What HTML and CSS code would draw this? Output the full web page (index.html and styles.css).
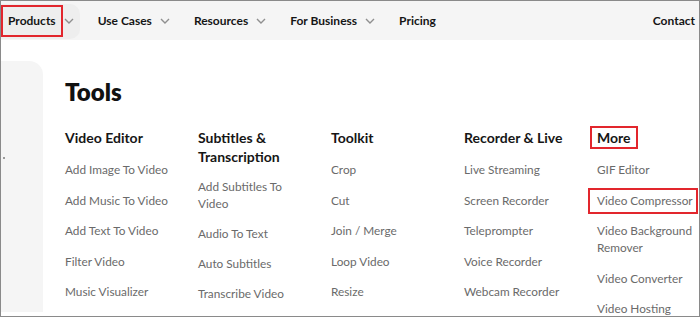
FILE: index.html
```html
<!DOCTYPE html>
<html lang="en">
<head>
  <meta charset="UTF-8" />
  <title>Tools menu</title>
  <link rel="stylesheet" href="styles.css">
</head>
<body>
  <div class="frame">
    <nav class="topbar">
      <div class="nav-item current">
        <span class="label marked">Products</span>
        <svg class="chev" viewBox="0 0 10 6"><path d="M1 1l4 4 4-4"/></svg>
      </div>
      <div class="nav-item">
        <span class="label">Use Cases</span>
        <svg class="chev" viewBox="0 0 10 6"><path d="M1 1l4 4 4-4"/></svg>
      </div>
      <div class="nav-item">
        <span class="label">Resources</span>
        <svg class="chev" viewBox="0 0 10 6"><path d="M1 1l4 4 4-4"/></svg>
      </div>
      <div class="nav-item">
        <span class="label">For Business</span>
        <svg class="chev" viewBox="0 0 10 6"><path d="M1 1l4 4 4-4"/></svg>
      </div>
      <div class="nav-item">
        <span class="label">Pricing</span>
      </div>
      <div class="nav-item contact">
        <span class="label">Contact</span>
      </div>
    </nav>

    <div class="page">
      <aside class="side"><span class="speck"></span></aside>

      <section class="menu">
        <h1>Tools</h1>
        <div class="cols">
          <div class="col">
            <h2>Video Editor</h2>
            <ul>
              <li>Add Image To Video</li>
              <li>Add Music To Video</li>
              <li>Add Text To Video</li>
              <li>Filter Video</li>
              <li>Music Visualizer</li>
            </ul>
          </div>
          <div class="col tight">
            <h2>Subtitles &amp; Transcription</h2>
            <ul>
              <li>Add Subtitles To Video</li>
              <li>Audio To Text</li>
              <li>Auto Subtitles</li>
              <li>Transcribe Video</li>
            </ul>
          </div>
          <div class="col">
            <h2>Toolkit</h2>
            <ul>
              <li>Crop</li>
              <li>Cut</li>
              <li>Join / Merge</li>
              <li>Loop Video</li>
              <li>Resize</li>
            </ul>
          </div>
          <div class="col">
            <h2>Recorder &amp; Live</h2>
            <ul>
              <li>Live Streaming</li>
              <li>Screen Recorder</li>
              <li>Teleprompter</li>
              <li>Voice Recorder</li>
              <li>Webcam Recorder</li>
            </ul>
          </div>
          <div class="col">
            <h2><span class="marked">More</span></h2>
            <ul>
              <li>GIF Editor</li>
              <li><span class="marked">Video Compressor</span></li>
              <li>Video Background Remover</li>
              <li>Video Converter</li>
              <li>Video Hosting</li>
            </ul>
          </div>
        </div>
      </section>
    </div>
  </div>
</body>
</html>
```

FILE: styles.css
```css
* { margin: 0; padding: 0; box-sizing: border-box; }
body {
  background: #fff;
  font-family: 'Lato', 'Noto Sans', sans-serif;
  color: #151515;
  overflow: hidden;
}
.frame {
  width: 700px;
  height: 317px;
  border: 1px solid #8a8a8a;
  overflow: hidden;
  background: #fff;
}

/* Top navigation */
.topbar {
  height: 39px;
  background: #f5f5f5;
  display: flex;
  align-items: center;
  gap: 24px;
  padding-left: 7px;
  font-size: 12px;
  font-weight: 700;
}
.nav-item {
  display: flex;
  align-items: center;
  gap: 8px;
  height: 34px;
  flex-shrink: 0;
}
.nav-item.current {
  position: relative;
}
.nav-item.current::before {
  content: '';
  position: absolute;
  left: -7px; right: -6px;
  top: 0; bottom: -1px;
  background: #eeeeee;
  border-radius: 0 10px 10px 0;
  z-index: 0;
}
.nav-item > * { position: relative; }
.chev {
  width: 10px;
  height: 6px;
  fill: none;
  stroke: #8f8f8f;
  stroke-width: 1.4;
}
.contact { margin-left: auto; margin-right: 4px; }

.marked {
  display: inline-block;
  outline: 2px solid #e2262d;
}
.topbar .marked {
  padding: 6px 5px 7px;
  margin: -6px -5px -7px;
}

/* Body */
.page {
  display: flex;
}
.side {
  flex: 0 0 42px;
  height: 251px;
  margin-top: 21px;
  background: #f5f5f5;
  border-top-right-radius: 14px;
  position: relative;
}
.speck {
  position: absolute;
  left: 2px; top: 96px;
  width: 2px; height: 2px;
  background: #9a9a9a;
}
.menu {
  flex-shrink: 0;
  padding: 37px 0 0 22px;
}
h1 {
  font-size: 24px;
  font-weight: 800;
  line-height: 30px;
  color: #111;
}
.cols {
  display: grid;
  grid-template-columns: repeat(5, 133px);
  margin-top: 21px;
}
h2 {
  font-size: 14px;
  font-weight: 700;
  line-height: 19px;
  color: #161616;
  padding-right: 20px;
}
h2 .marked {
  padding: 0 5px;
  margin: 0 -5px;
}
ul {
  list-style: none;
  display: flex;
  flex-direction: column;
  gap: 13.5px;
  margin-top: 14px;
}
.tight ul {
  margin-top: 12px;
  gap: 13px;
}
li {
  font-size: 11.8px;
  line-height: 17px;
  color: #6a6a6a;
  padding-right: 24px;
}
.col:last-child li { padding-right: 0; }
li .marked {
  padding: 2px 3px 3px 7px;
  margin: -2px -3px -3px -7px;
}
```
